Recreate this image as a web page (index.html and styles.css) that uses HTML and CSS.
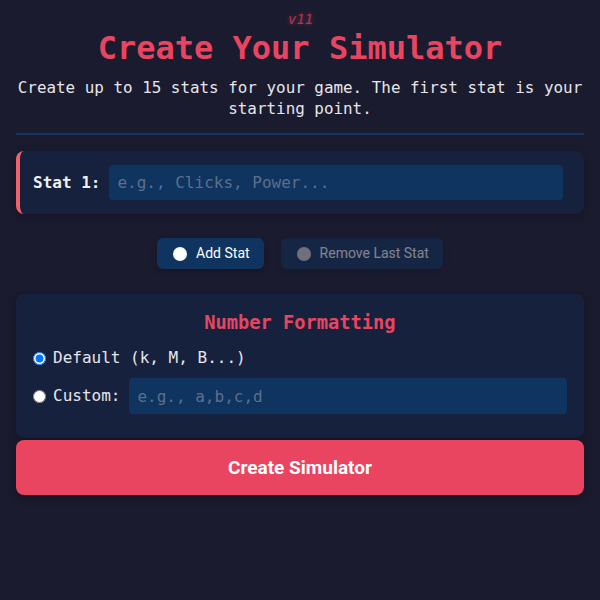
FILE: index.html
```html
<!DOCTYPE html>
<html lang="en">
<head>
<meta charset="utf-8">
<title>Create Your Simulator</title>
<link rel="stylesheet" href="styles.css">
</head>
<body>
  <main class="app">
    <header class="header">
      <h1 class="title">Create Your Simulator<span class="version">v11</span></h1>
      <p class="subtitle">Create up to 15 stats for your game. The first stat is your starting point.</p>
    </header>

    <section class="stats">
      <div class="stat-row">
        <label class="stat-label" for="stat1">Stat 1:</label>
        <input class="text-input" id="stat1" type="text" placeholder="e.g., Clicks, Power...">
      </div>
    </section>

    <div class="stat-actions">
      <button class="btn btn-secondary" type="button"><span class="btn-dot"></span>Add Stat</button>
      <button class="btn btn-secondary" type="button" disabled><span class="btn-dot"></span>Remove Last Stat</button>
    </div>

    <section class="format-card">
      <h3 class="format-title">Number Formatting</h3>
      <label class="format-option">
        <input type="radio" name="format" checked>
        <span>Default (k, M, B...)</span>
      </label>
      <label class="format-option">
        <input type="radio" name="format">
        <span>Custom:</span>
        <input class="text-input" type="text" placeholder="e.g., a,b,c,d">
      </label>
    </section>

    <button class="btn-primary" type="button">Create Simulator</button>
  </main>
</body>
</html>
```

FILE: styles.css
```css
* {
  box-sizing: border-box;
}

body {
  margin: 0;
  padding: 16px;
  background: #1b1b2f;
  color: #e6e6ea;
  font-family: "DejaVu Sans Mono", "Liberation Mono", monospace;
  font-size: 16px;
}

.app {
  display: flex;
  flex-direction: column;
}

/* Heading */
.header {
  text-align: center;
  padding-bottom: 14px;
  border-bottom: 2px solid #133563;
}

.title {
  position: relative;
  margin: 14px 0 0;
  font-size: 32px;
  line-height: 36px;
  font-weight: 700;
  color: #e94560;
}

.version {
  position: absolute;
  top: -18px;
  left: 50%;
  transform: translateX(-12px);
  font-size: 14px;
  line-height: 14px;
  font-weight: 400;
  font-style: italic;
  color: #c83a58;
  opacity: 0.85;
  text-shadow: 0 0 4px rgba(233, 69, 96, 0.6);
}

.subtitle {
  margin: 11px 0 0;
  font-size: 15.9px;
  line-height: 21px;
  color: #e6e6ea;
}

/* Stat list */
.stats {
  margin-top: 16px;
}

.stat-row {
  display: flex;
  align-items: center;
  gap: 9px;
  padding: 14px 21px 14px 13px;
  background: #16213e;
  border-left: 4px solid #f0636a;
  border-radius: 8px;
  box-shadow: 0 2px 8px rgba(0, 0, 0, 0.3);
}

.stat-label {
  font-weight: 700;
  color: #eef0f4;
  white-space: nowrap;
}

.text-input {
  flex: 1;
  min-width: 0;
  height: 35px;
  padding: 0 8px;
  border: none;
  border-radius: 4px;
  background: #0f3460;
  color: #e6e6ea;
  font-family: inherit;
  font-size: 16px;
  outline: none;
}

.text-input::placeholder {
  color: #5d6f8c;
}

/* Add / remove buttons */
.stat-actions {
  display: flex;
  justify-content: center;
  gap: 17px;
  margin-top: 24px;
}

.btn {
  display: inline-flex;
  align-items: center;
  gap: 9px;
  height: 31px;
  padding: 0 14px 0 16px;
  border: none;
  border-radius: 6px;
  background: #0f3460;
  color: #ffffff;
  font-family: Roboto, "Liberation Sans", sans-serif;
  font-size: 14px;
  line-height: 17px;
  box-shadow: 0 2px 6px rgba(0, 0, 0, 0.3);
}

.btn:disabled {
  opacity: 0.45;
}

.btn-dot {
  width: 14px;
  height: 14px;
  border-radius: 50%;
  background: radial-gradient(circle, #ffffff 55%, #e3e6ee 100%);
}

.btn:disabled .btn-dot {
  background: #d8d8dc;
}

/* Number formatting */
.format-card {
  display: flex;
  flex-direction: column;
  margin-top: 25px;
  padding: 18px 17px 24px;
  background: #16213e;
  border-radius: 8px;
  box-shadow: 0 2px 8px rgba(0, 0, 0, 0.3);
}

.format-title {
  margin: 0;
  text-align: center;
  font-size: 18.7px;
  line-height: 22px;
  font-weight: 700;
  color: #e94560;
}

.format-option {
  display: flex;
  align-items: center;
  gap: 7px;
  margin-top: 13px;
  line-height: 22px;
  color: #e6e6ea;
}

.format-option + .format-option {
  margin-top: 9px;
}

.format-option input[type="radio"] {
  width: 13px;
  height: 13px;
  margin: 0;
}

.format-option .text-input {
  height: 36px;
  margin-left: 2px;
}

/* Submit */
.btn-primary {
  margin-top: 2px;
  height: 55px;
  border: none;
  border-radius: 8px;
  background: #e94560;
  color: #ffffff;
  font-family: Roboto, "Liberation Sans", sans-serif;
  font-size: 19px;
  font-weight: 700;
  box-shadow: 0 3px 8px rgba(0, 0, 0, 0.3);
}
```
